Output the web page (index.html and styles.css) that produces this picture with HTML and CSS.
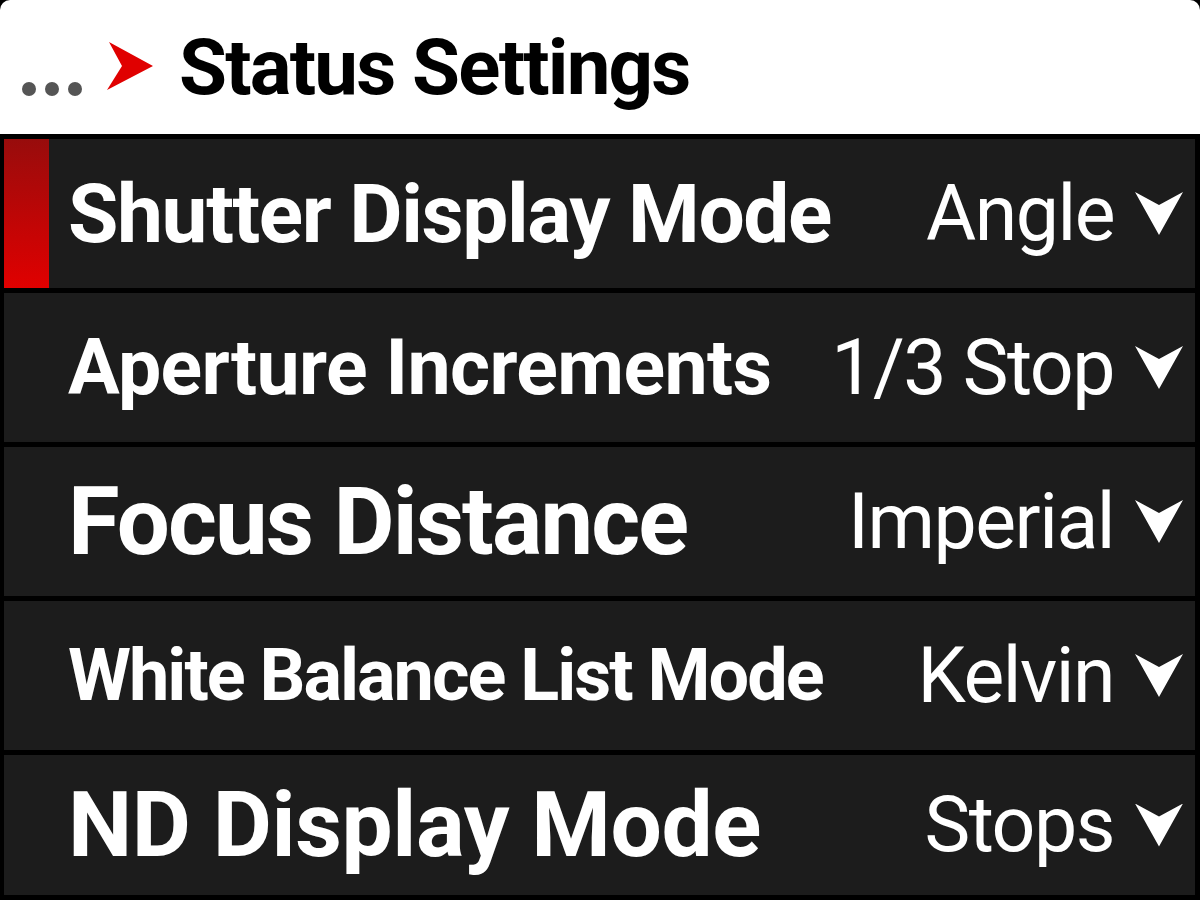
FILE: index.html
```html
<!DOCTYPE html>
<html>
    <head>
        <meta charset="UTF-8">
        <link rel="stylesheet" href="styles.css">
    </head>
    <body>
        <div class="screen">
            <div class="header">
                <span class="dots"><i></i><i></i><i></i></span>
                <svg class="crumb" width="48" height="50" viewBox="0 0 48 50">
                    <polygon points="2,0 46,24 0,48 15,24" fill="#e00000"/>
                </svg>
                <h1>Status Settings</h1>
            </div>

            <ul class="menu">
                <li class="selected">
                    <span class="label l-shutter">Shutter Display Mode</span>
                    <span class="value">Angle</span>
                </li>
                <li>
                    <span class="label l-aperture">Aperture Increments</span>
                    <span class="value">1/3 Stop</span>
                </li>
                <li>
                    <span class="label l-focus">Focus Distance</span>
                    <span class="value">Imperial</span>
                </li>
                <li>
                    <span class="label l-wb">White Balance List Mode</span>
                    <span class="value">Kelvin</span>
                </li>
                <li>
                    <span class="label l-nd">ND Display Mode</span>
                    <span class="value">Stops</span>
                </li>
            </ul>
        </div>
    </body>
</html>
```

FILE: styles.css
```css
* {
    box-sizing: border-box;
}

body {
    margin: 0;
    background: #000;
    font-family: Roboto, "Liberation Sans", sans-serif;
}

.screen {
    width: 1200px;
    height: 900px;
    display: flex;
    flex-direction: column;
    overflow: hidden;
}

/* breadcrumb header */
.header {
    height: 134px;
    background: #fff;
    border-radius: 10px 10px 0 0;
    display: flex;
    align-items: center;
    padding-left: 22px;
}

.dots {
    display: flex;
    gap: 9px;
    margin-top: 44px;
}

.dots i {
    width: 14px;
    height: 14px;
    border-radius: 50%;
    background: #555;
}

.crumb {
    margin: 0 24px 0 25px;
}

.header h1 {
    margin: 0;
    font-size: 78px;
    font-weight: 700;
    letter-spacing: -1.8px;
    color: #000;
}

/* the setting rows */
.menu {
    flex: 1;
    margin: 0;
    padding: 5px 5px 5px 4px;
    list-style: none;
    display: flex;
    flex-direction: column;
    gap: 5px;
}

.menu li {
    height: 149px;
    background: #1c1c1c;
    display: flex;
    align-items: center;
    padding: 0 12px 0 64px;
    color: #fff;
    position: relative;
}

.menu li:last-child {
    height: auto;
    flex: 1;
}

.menu li.selected::before {
    content: "";
    position: absolute;
    left: 0;
    top: 0;
    bottom: 0;
    width: 45px;
    background: linear-gradient(#980c0c, #e00000);
}

.label {
    font-weight: 700;
    white-space: nowrap;
}

.l-shutter { font-size: 82px; letter-spacing: -1.4px; }
.l-aperture { font-size: 77px; letter-spacing: -0.6px; }
.l-focus { font-size: 94px; letter-spacing: -1.9px; }
.l-wb { font-size: 72px; letter-spacing: -2px; }
.l-nd { font-size: 91px; letter-spacing: -0.4px; }

.value {
    margin-left: auto;
    font-size: 77px;
    letter-spacing: -1.5px;
    display: flex;
    align-items: center;
    white-space: nowrap;
}

/* the little drop-down chevron */
.value::after {
    content: "";
    width: 48px;
    height: 43px;
    margin-left: 21px;
    background: #fff;
    clip-path: polygon(0 0, 50% 30%, 100% 0, 50% 100%);
}
```
